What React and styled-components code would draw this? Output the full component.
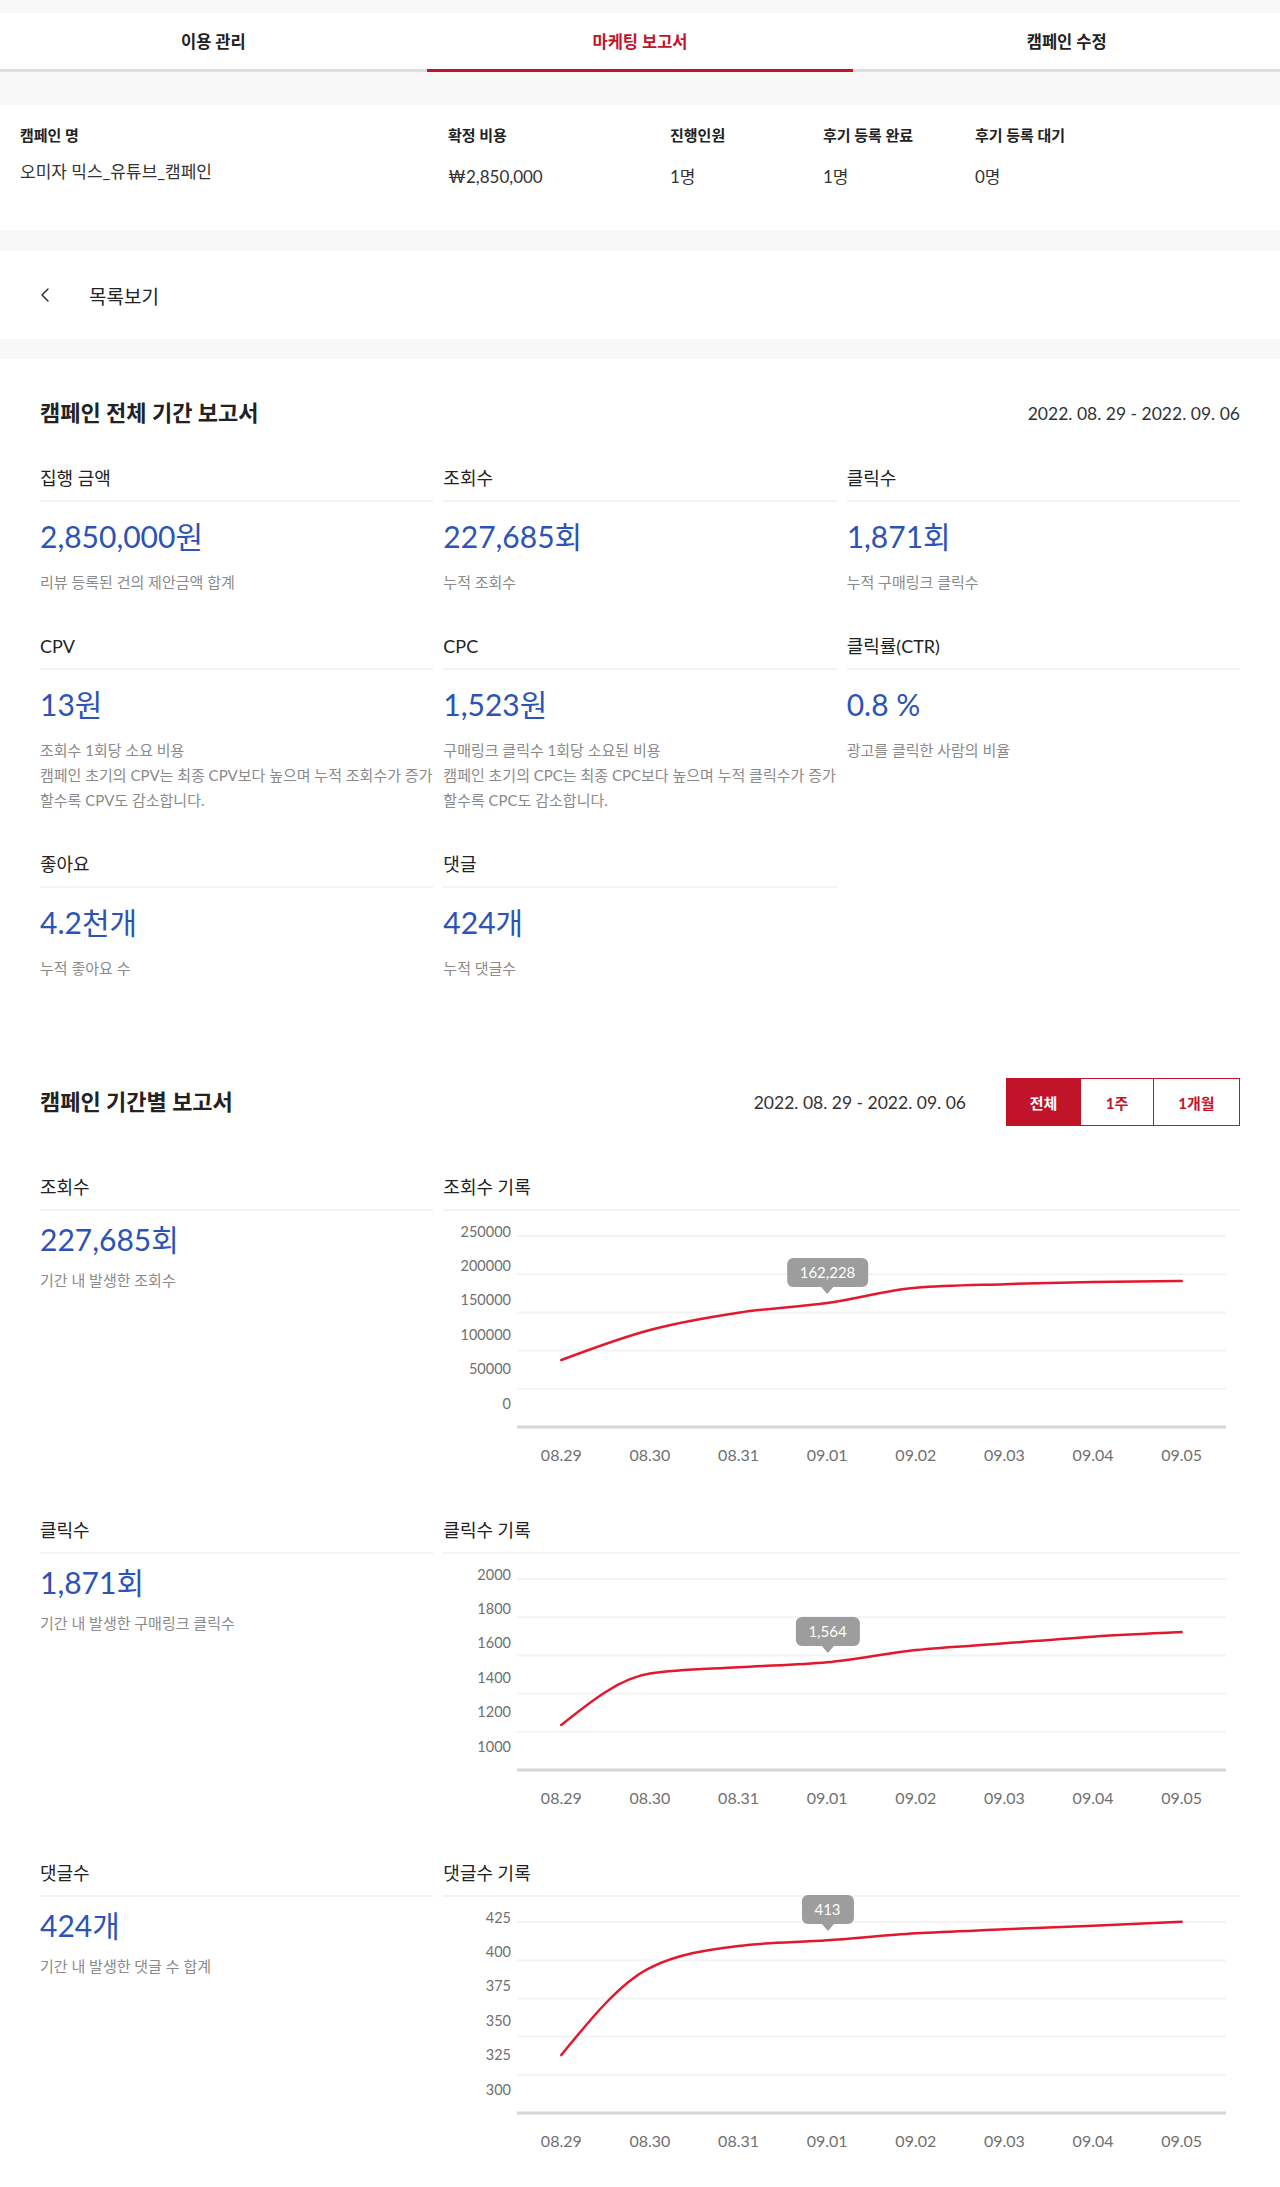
import React from "react";
import styled, { createGlobalStyle } from "styled-components";
import { ChevronLeft } from "lucide-react";

const RED = "#c1142b";
const LINE_RED = "#e3172d";
const BLUE = "#2c53b6";
const BAND = "#f8f8f8";

const GlobalStyle = createGlobalStyle`
  html, body { margin: 0; padding: 0; background: #fff; }
  body {
    font-family: Lato, "Noto Sans CJK KR", sans-serif;
    color: #222;
  }
  * { box-sizing: border-box; }
`;

const Page = styled.div`
  width: 1280px;
  background: #fff;
`;

const Band = styled.div`
  height: ${(p) => p.$h}px;
  background: ${BAND};
`;

const TabBar = styled.nav`
  display: flex;
`;

const Tab = styled.div`
  flex: 1;
  text-align: center;
  padding: 19px 0 17px;
  line-height: 20px;
  font-size: 16.5px;
  font-weight: 700;
  color: ${(p) => (p.$active ? RED : "#222")};
  border-bottom: 3px solid ${(p) => (p.$active ? RED : "#dedede")};
`;

const InfoGrid = styled.section`
  display: grid;
  grid-template-columns: 428px 222px 153px 152px 1fr;
  row-gap: 20px;
  padding: 20px 20px 41px;
  align-items: start;
`;

const InfoLabel = styled.div`
  font-size: 15px;
  font-weight: 700;
  line-height: 20px;
  color: #222;
`;

const InfoValue = styled.div`
  font-size: 17px;
  line-height: ${(p) => (p.$tight ? 14 : 24)}px;
  color: #333;
`;

const BackRow = styled.div`
  height: 88px;
  display: flex;
  align-items: center;
  padding-left: 33px;
  gap: 32px;
  font-size: 19px;
  color: #222;
`;

const Report = styled.section`
  padding: 40px 40px 20px;
`;

const SectionHead = styled.div`
  display: flex;
  align-items: center;
  justify-content: space-between;
  height: ${(p) => p.$h}px;
  margin-top: ${(p) => p.$mt || 0}px;
`;

const Heading = styled.h2`
  margin: 0;
  font-size: 22px;
  line-height: 28px;
  font-weight: 700;
  color: #222;
`;

const HeadRight = styled.div`
  display: flex;
  align-items: center;
  gap: 40px;
`;

const DateText = styled.span`
  font-size: 17.5px;
  color: #333;
`;

const Periods = styled.div`
  display: flex;
  height: 48px;
`;

const PeriodBtn = styled.button`
  width: ${(p) => p.$w}px;
  height: 48px;
  margin: 0 0 0 -1px;
  padding: 0;
  border: 1px solid ${RED};
  background: ${(p) => (p.$active ? RED : "#fff")};
  color: ${(p) => (p.$active ? "#fff" : RED)};
  font-family: inherit;
  font-size: 15px;
  font-weight: 700;
  cursor: pointer;
  &:first-child { margin-left: 0; }
`;

const MetricGrid = styled.div`
  display: grid;
  grid-template-columns: repeat(3, 1fr);
  column-gap: 10px;
  row-gap: 39px;
  margin-top: 39px;
`;

const Metric = styled.div`
  min-width: 0;
`;

const MetricLabel = styled.div`
  font-size: 18px;
  line-height: 24px;
  color: #222;
  padding-bottom: 10px;
  border-bottom: 2px solid #f3f3f3;
`;

const MetricValue = styled.div`
  font-size: 30px;
  line-height: 36px;
  color: ${BLUE};
  margin-top: ${(p) => (p.$compact ? 10 : 16)}px;
`;

const MetricDesc = styled.div`
  font-size: 15px;
  line-height: 25px;
  color: #8a8a8a;
  margin-top: ${(p) => (p.$compact ? 11 : 16)}px;
  white-space: nowrap;
`;

const ChartRows = styled.div`
  display: flex;
  flex-direction: column;
  gap: 37px;
  margin-top: 49px;
`;

const ChartRow = styled.div`
  display: grid;
  grid-template-columns: repeat(3, 1fr);
  column-gap: 10px;
`;

const ChartCell = styled.div`
  grid-column: span 2;
  min-width: 0;
`;

const ChartBox = styled.div`
  position: relative;
  height: 270px;
`;

const ChartSvg = styled.svg`
  display: block;
  font-family: Lato, "Noto Sans CJK KR", sans-serif;
`;

const Tip = styled.div`
  position: absolute;
  transform: translate(-50%, -100%);
  background: #9d9d9d;
  color: #fff;
  font-size: 15px;
  line-height: 29px;
  height: 29px;
  padding: 0 13px;
  border-radius: 6px;
  white-space: nowrap;
  &::after {
    content: "";
    position: absolute;
    left: 50%;
    top: 100%;
    margin-left: -6px;
    border-left: 6px solid transparent;
    border-right: 6px solid transparent;
    border-top: 7px solid #9d9d9d;
  }
`;

// monotone cubic interpolation (no overshoot)
function monotonePath(pts) {
  const n = pts.length;
  const h = [], s = [];
  for (let i = 0; i < n - 1; i++) {
    h[i] = pts[i + 1][0] - pts[i][0];
    s[i] = (pts[i + 1][1] - pts[i][1]) / h[i];
  }
  const sign = (v) => (v < 0 ? -1 : 1);
  const t = [];
  for (let i = 1; i < n - 1; i++) {
    const s0 = s[i - 1], s1 = s[i];
    const p = (s0 * h[i] + s1 * h[i - 1]) / (h[i - 1] + h[i]);
    t[i] = (sign(s0) + sign(s1)) * Math.min(Math.abs(s0), Math.abs(s1), 0.5 * Math.abs(p)) || 0;
  }
  t[0] = (3 * s[0] - t[1]) / 2;
  t[n - 1] = (3 * s[n - 2] - t[n - 2]) / 2;
  let d = `M${pts[0][0]},${pts[0][1]}`;
  for (let i = 0; i < n - 1; i++) {
    const k = h[i] / 3;
    d += ` C${pts[i][0] + k},${pts[i][1] + t[i] * k} ${pts[i + 1][0] - k},${pts[i + 1][1] - t[i + 1] * k} ${pts[i + 1][0]},${pts[i + 1][1]}`;
  }
  return d;
}

const DATES = ["08.29", "08.30", "08.31", "09.01", "09.02", "09.03", "09.04", "09.05"];

function Chart({ data, min, max, ticks, tipIndex, tipText }) {
  const W = 797, H = 270, x0 = 74, x1 = 783, top = 25, base = 216;
  const band = (x1 - x0) / data.length;
  const pts = data.map((v, i) => [
    x0 + band / 2 + i * band,
    base - ((v - min) / (max - min)) * (base - top),
  ]);
  const grid = [0, 1, 2, 3, 4].map((i) => top + i * ((base - top) / 5));
  const tp = pts[tipIndex];
  return (
    <ChartBox>
      <ChartSvg width={W} height={H} viewBox={`0 0 ${W} ${H}`}>
        {grid.map((y) => (
          <line key={y} x1={x0} x2={x1} y1={y} y2={y} stroke="#f3f3f3" strokeWidth="2" />
        ))}
        <line x1={x0} x2={x1} y1={base} y2={base} stroke="#d6d6d6" strokeWidth="3" />
        {ticks.map((t, i) => (
          <text key={t} x={68} y={22 + i * 34.4} textAnchor="end" dominantBaseline="middle" fontSize="14.5" fill="#707070">
            {t}
          </text>
        ))}
        {DATES.map((d, i) => (
          <text key={d} x={pts[i][0]} y={246} textAnchor="middle" dominantBaseline="middle" fontSize="16" fill="#707070">
            {d}
          </text>
        ))}
        <path d={monotonePath(pts)} fill="none" stroke={LINE_RED} strokeWidth="2.5" strokeLinecap="round" />
      </ChartSvg>
      <Tip style={{ left: tp[0], top: tp[1] - 16 }}>{tipText}</Tip>
    </ChartBox>
  );
}

const metrics = [
  { label: "집행 금액", value: "2,850,000원", desc: ["리뷰 등록된 건의 제안금액 합계"] },
  { label: "조회수", value: "227,685회", desc: ["누적 조회수"] },
  { label: "클릭수", value: "1,871회", desc: ["누적 구매링크 클릭수"] },
  {
    label: "CPV",
    value: "13원",
    desc: ["조회수 1회당 소요 비용", "캠페인 초기의 CPV는 최종 CPV보다 높으며 누적 조회수가 증가", "할수록 CPV도 감소합니다."],
  },
  {
    label: "CPC",
    value: "1,523원",
    desc: ["구매링크 클릭수 1회당 소요된 비용", "캠페인 초기의 CPC는 최종 CPC보다 높으며 누적 클릭수가 증가", "할수록 CPC도 감소합니다."],
  },
  { label: "클릭률(CTR)", value: "0.8 %", desc: ["광고를 클릭한 사람의 비율"] },
  { label: "좋아요", value: "4.2천개", desc: ["누적 좋아요 수"] },
  { label: "댓글", value: "424개", desc: ["누적 댓글수"] },
];

const charts = [
  {
    label: "조회수",
    value: "227,685회",
    desc: "기간 내 발생한 조회수",
    title: "조회수 기록",
    data: [87700, 127000, 149600, 162228, 182300, 187000, 189800, 191000],
    min: 0,
    max: 250000,
    ticks: ["250000", "200000", "150000", "100000", "50000", "0"],
    tip: "162,228",
  },
  {
    label: "클릭수",
    value: "1,871회",
    desc: "기간 내 발생한 구매링크 클릭수",
    title: "클릭수 기록",
    data: [1236, 1505, 1538, 1564, 1628, 1663, 1698, 1722],
    min: 1000,
    max: 2000,
    ticks: ["2000", "1800", "1600", "1400", "1200", "1000"],
    tip: "1,564",
  },
  {
    label: "댓글수",
    value: "424개",
    desc: "기간 내 발생한 댓글 수 합계",
    title: "댓글수 기록",
    data: [338, 395, 409.3, 413, 417.6, 420.2, 422.6, 425.2],
    min: 300,
    max: 425,
    ticks: ["425", "400", "375", "350", "325", "300"],
    tip: "413",
  },
];

export default function App() {
  return (
    <Page>
      <GlobalStyle />
      <Band $h={13} />
      <TabBar>
        <Tab>이용 관리</Tab>
        <Tab $active>마케팅 보고서</Tab>
        <Tab>캠페인 수정</Tab>
      </TabBar>
      <Band $h={33} />
      <InfoGrid>
        <InfoLabel>캠페인 명</InfoLabel>
        <InfoLabel>확정 비용</InfoLabel>
        <InfoLabel>진행인원</InfoLabel>
        <InfoLabel>후기 등록 완료</InfoLabel>
        <InfoLabel>후기 등록 대기</InfoLabel>
        <InfoValue $tight>오미자 믹스_유튜브_캠페인</InfoValue>
        <InfoValue>₩2,850,000</InfoValue>
        <InfoValue>1명</InfoValue>
        <InfoValue>1명</InfoValue>
        <InfoValue>0명</InfoValue>
      </InfoGrid>
      <Band $h={21} />
      <BackRow>
        <ChevronLeft size={24} strokeWidth={1.5} color="#333" />
        <span>목록보기</span>
      </BackRow>
      <Band $h={20} />
      <Report>
        <SectionHead $h={28}>
          <Heading>캠페인 전체 기간 보고서</Heading>
          <DateText>2022. 08. 29 - 2022. 09. 06</DateText>
        </SectionHead>
        <MetricGrid>
          {metrics.map((m) => (
            <Metric key={m.label}>
              <MetricLabel>{m.label}</MetricLabel>
              <MetricValue>{m.value}</MetricValue>
              <MetricDesc>
                {m.desc.map((line, i) => (
                  <div key={i}>{line}</div>
                ))}
              </MetricDesc>
            </Metric>
          ))}
        </MetricGrid>

        <SectionHead $h={48} $mt={97}>
          <Heading>캠페인 기간별 보고서</Heading>
          <HeadRight>
            <DateText>2022. 08. 29 - 2022. 09. 06</DateText>
            <Periods>
              <PeriodBtn $active $w={75}>전체</PeriodBtn>
              <PeriodBtn $w={74}>1주</PeriodBtn>
              <PeriodBtn $w={87}>1개월</PeriodBtn>
            </Periods>
          </HeadRight>
        </SectionHead>

        <ChartRows>
          {charts.map((c) => (
            <ChartRow key={c.label}>
              <Metric>
                <MetricLabel>{c.label}</MetricLabel>
                <MetricValue $compact>{c.value}</MetricValue>
                <MetricDesc $compact>{c.desc}</MetricDesc>
              </Metric>
              <ChartCell>
                <MetricLabel>{c.title}</MetricLabel>
                <Chart data={c.data} min={c.min} max={c.max} ticks={c.ticks} tipIndex={3} tipText={c.tip} />
              </ChartCell>
            </ChartRow>
          ))}
        </ChartRows>
      </Report>
    </Page>
  );
}
